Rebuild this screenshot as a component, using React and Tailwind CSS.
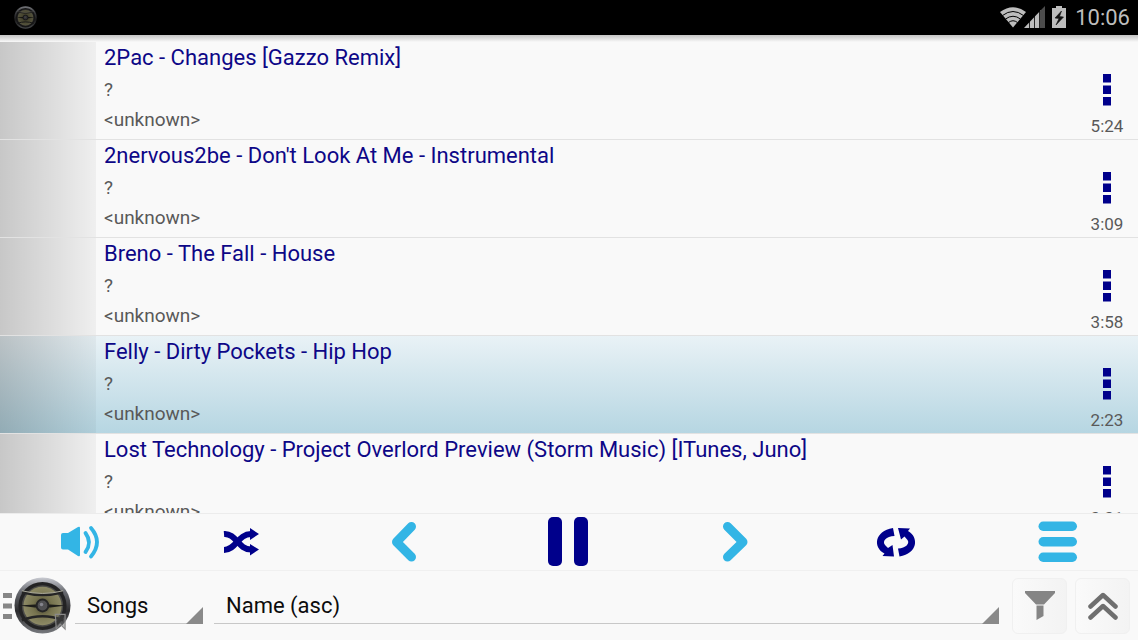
const songs = [
  { title: '2Pac - Changes [Gazzo Remix]', time: '5:24' },
  { title: "2nervous2be - Don't Look At Me - Instrumental", time: '3:09' },
  { title: 'Breno - The Fall - House', time: '3:58' },
  { title: 'Felly - Dirty Pockets - Hip Hop', time: '2:23', active: true },
  { title: 'Lost Technology - Project Overlord Preview (Storm Music) [ITunes, Juno]', time: '3:31' },
];

function SpeakerLogo({ className, badge, id }) {
  return (
    <svg viewBox="0 0 58 58" className={className} aria-hidden="true">
      <defs>
        <linearGradient id={`${id}-rim`} x1="0" y1="0" x2="0" y2="1">
          <stop offset="0" stopColor="#c9cbd2" />
          <stop offset="0.25" stopColor="#6a6c72" />
          <stop offset="0.6" stopColor="#2c2c2e" />
          <stop offset="1" stopColor="#77797d" />
        </linearGradient>
        <radialGradient id={`${id}-cone`}>
          <stop offset="0" stopColor="#3d3b2c" />
          <stop offset="0.5" stopColor="#77744f" />
          <stop offset="1" stopColor="#8d8a66" />
        </radialGradient>
      </defs>
      <circle cx="29" cy="29" r="28.500" fill={`url(#${id}-rim)`} />
      <circle cx="29" cy="29.500" r="24.500" fill="#232324" />
      <circle cx="29" cy="29.500" r="21" fill="#4b4b48" />
      <circle cx="29" cy="29.500" r="19.500" fill={`url(#${id}-cone)`} />
      <path d="M5 29 L21 28 H37 L53 29 L37 31 H21Z" fill="#1d1d1a" />
      <path d="M8 15.500 Q29 21 50 15.500" fill="none" stroke="#252525" strokeWidth="2.500" />
      <path d="M8 14 Q29 19.500 50 14" fill="none" stroke="#aaa99b" strokeWidth="1" />
      <path d="M8 44 Q29 36 50 44" fill="none" stroke="#252525" strokeWidth="2.500" />
      <circle cx="29" cy="29" r="7" fill="#252525" />
      <circle cx="29" cy="29" r="5" fill="#505052" />
      <circle cx="28" cy="28" r="1.800" fill="#85858d" />
      {badge && (
        <path d="M42 38 H52 V53 L47 48 L43 53Z" fill="#55555566" stroke="#8a8a8a" strokeWidth="1.200" />
      )}
    </svg>
  );
}

function StatusBar() {
  return (
    <header className="flex h-[35px] shrink-0 items-center justify-between bg-black pl-[14px] pr-2">
      <SpeakerLogo className="size-[23px] opacity-60" id="status" />
      <div className="flex items-center text-[#bdbdbd]">
        <svg viewBox="0 0 68 24" className="h-6 w-[68px]" aria-label="Wi-Fi, signal and charging" role="img">
          <path d="M13 21.500 L0 6 Q13 -3.500 26 6Z" fill="#bdbdbd" />
          <g fill="none" stroke="#000" strokeWidth="1">
            <path d="M2.500 9.500 Q13 1.500 23.500 9.500" />
            <path d="M5.500 13 Q13 7.500 20.500 13" />
            <path d="M8.500 16.500 Q13 13 17.500 16.500" />
          </g>
          <path d="M24 22 L41 4 V22Z" fill="#bdbdbd" />
          <path d="M40 5 L45 0 V22 H40Z" fill="#4c4c4c" />
          <path d="M29.500 10 V22 M34.500 5 V22 M39.500 3 V22" stroke="#000" strokeWidth="0.800" />
          <path d="M56 0 H62 V2 H66 V22 H52 V2 H56Z" fill="#bdbdbd" />
          <path d="M61.500 5 L55 12 L59 12.500 L56 19 L63.500 11 L59.500 10.500Z" fill="#111" stroke="#111" strokeWidth="0.600" />
        </svg>
        <time className="w-[62px] text-right text-[22px] leading-6">10:06</time>
      </div>
    </header>
  );
}

function SongRow({ song }) {
  return (
    <li
      className={`flex h-[98px] shrink-0 border-b border-[#e2e2e2] ${
        song.active ? 'bg-linear-to-b from-[#e9f2f6] to-[#b6d6e2]' : 'bg-[#f9f9f9]'
      }`}
    >
      <div className="w-24 shrink-0 bg-linear-to-r from-black/20 to-black/4" />
      <div className="min-w-0 flex-1 whitespace-nowrap pl-2 text-[19px] text-[#595959]">
        <h2 className="h-8 text-[22px] leading-8 text-[#0d0787]">{song.title}</h2>
        <p className="h-8 leading-8">?</p>
        <p className="h-7 leading-7">&lt;unknown&gt;</p>
      </div>
      <div className="flex w-[62px] shrink-0 flex-col items-center pt-6">
        <button type="button" aria-label={`Options for ${song.title}`} className="flex h-12 w-10 shrink-0 items-center justify-center">
          <svg viewBox="0 0 10 32" className="h-8 w-[10px]" fill="#00008b">
            <path d="M1 0h8v8.500H1zM1 11.500h8V20H1zM1 23h8v8.500H1z" />
          </svg>
        </button>
        <span className="text-[17px] leading-6 text-[#595959]">{song.time}</span>
      </div>
    </li>
  );
}

const controls = [
  {
    label: 'Volume',
    art: (
      <g>
        <path d="M14 19 H19 L29 13 Q31 12 31 14 V41 Q31 43 29 42 L19 35.500 H14 Q12 35.500 12 33.500 V21 Q12 19 14 19Z" fill="#33b5e5" />
        <path d="M36.500 19 Q43.500 28.500 36.500 38 M42 14 Q54 28 42 42.500" fill="none" stroke="#33b5e5" strokeWidth="3.800" strokeLinecap="round" />
      </g>
    ),
  },
  {
    label: 'Shuffle',
    art: (
      <g fill="none" stroke="#00008b" strokeWidth="6">
        <path d="M12 20 C24 19 26 35.500 39 35.500" />
        <path d="M12 36 C24 36 26 20 39 20" />
        <path d="M38 14 L47 20 L38 26Z M38 30 L47 35.500 L38 41.500Z" fill="#00008b" stroke="none" />
      </g>
    ),
  },
  {
    label: 'Previous',
    art: <path d="M37.500 12.500 L22.500 28 L37.500 43" fill="none" stroke="#33b5e5" strokeWidth="9" strokeLinecap="round" strokeLinejoin="round" />,
  },
  {
    label: 'Pause',
    art: (
      <g fill="#00008b">
        <rect x="11" y="3" width="14" height="49" rx="5" />
        <rect x="37" y="3" width="14" height="49" rx="5" />
      </g>
    ),
  },
  {
    label: 'Next',
    art: <path d="M27.500 12.500 L43 28 L27.500 43" fill="none" stroke="#33b5e5" strokeWidth="9" strokeLinecap="round" strokeLinejoin="round" />,
  },
  {
    label: 'Repeat',
    art: (
      <g fill="#00008b">
        <path d="M31 14 L32.500 22 C24 22.500 20 27 23 31 L26 34 L30.500 31 L32 42.500 L20.500 42 L22.500 39.500 C11 34 12 17 31 14Z" />
        <path d="M37.500 42.500 L36 34.500 C44 34 48 29.500 45.500 26 L42.500 22.500 L39 25.500 L36 14 L48 14.500 L46 17 C57 23 56 39.500 37.500 42.500Z" />
      </g>
    ),
  },
  {
    label: 'Playlist',
    art: (
      <g fill="#33b5e5">
        <rect x="13.500" y="7.500" width="38.500" height="9.500" rx="4.700" />
        <rect x="13.500" y="23" width="38.500" height="9.500" rx="4.700" />
        <rect x="13.500" y="38.500" width="38.500" height="9.500" rx="4.700" />
      </g>
    ),
  },
];

function Spinner({ label, value, options, className }) {
  return (
    <div className={`relative flex h-9 border-b border-[#c8c8c8] ${className}`}>
      <select
        aria-label={label}
        defaultValue={value}
        className="h-9 w-full appearance-none bg-transparent pl-3 text-[22px] text-[#0c0c0c] outline-none"
      >
        {options.map((option) => (
          <option key={option}>{option}</option>
        ))}
      </select>
      <svg viewBox="0 0 17 17" className="pointer-events-none absolute right-0 -bottom-px size-[17px]" aria-hidden="true">
        <path d="M17 0 V17 H0Z" fill="#8a8a8a" />
      </svg>
    </div>
  );
}

function ToolButton({ label, children }) {
  return (
    <button
      type="button"
      aria-label={label}
      className="flex h-14 w-[55px] shrink-0 items-center justify-center rounded-md border border-[#f0f0f0] bg-linear-to-r from-[#fafafa] to-[#f3f3f3]"
    >
      {children}
    </button>
  );
}

export default function App() {
  return (
    <div className="flex h-screen flex-col overflow-hidden bg-[#f9f9f9] font-['Roboto','Liberation_Sans',sans-serif]">
      <StatusBar />
      <div className="h-[7px] shrink-0 bg-linear-to-b from-[#c4c4c4] to-[#f9f9f9]" />
      <main className="min-h-0 flex-1 overflow-hidden">
        <ul className="flex flex-col">
          {songs.map((song) => (
            <SongRow key={song.title} song={song} />
          ))}
        </ul>
      </main>
      <nav aria-label="Playback" className="grid h-[57px] shrink-0 grid-cols-7 border-t border-[#ececec]">
        {controls.map((control) => (
          <button key={control.label} type="button" aria-label={control.label} className="flex items-center justify-center">
            <svg viewBox="0 0 64 56" className="h-14 w-16">
              {control.art}
            </svg>
          </button>
        ))}
      </nav>
      <footer className="flex h-[70px] shrink-0 items-center border-t border-[#f0f0f0] pl-[3px] pr-2">
        <button type="button" aria-label="Open menu" className="flex shrink-0 items-center gap-0.5">
          <svg viewBox="0 0 9 26" className="h-[26px] w-[9px]" fill="#868686">
            <path d="M0 0h9v5H0zM0 10.500h9v5H0zM0 21h9v5H0z" />
          </svg>
          <SpeakerLogo className="size-[57px]" badge id="main" />
        </button>
        <Spinner label="View" value="Songs" options={['Songs', 'Artists', 'Albums']} className="ml-1 w-32 shrink-0" />
        <Spinner label="Sort by" value="Name (asc)" options={['Name (asc)', 'Name (desc)']} className="ml-[11px] min-w-0 flex-1" />
        <div className="ml-[13px] flex gap-2">
          <ToolButton label="Filter">
            <svg viewBox="0 0 30 30" className="size-[30px]" fill="#858585">
              <path d="M0 0 H30 V2 L19 13.500 H11 L0 2Z M11.500 14.500 H18.500 V25 L11.500 29Z" />
            </svg>
          </ToolButton>
          <ToolButton label="Scroll to top">
            <svg viewBox="0 0 30 30" className="size-[30px]" fill="none" stroke="#6f6f6f" strokeWidth="4.500" strokeLinecap="round" strokeLinejoin="round">
              <path d="M2.500 15.500 L15 4 L27.500 15.500 M2.500 26.500 L15 15 L27.500 26.500" />
            </svg>
          </ToolButton>
        </div>
      </footer>
    </div>
  );
}
